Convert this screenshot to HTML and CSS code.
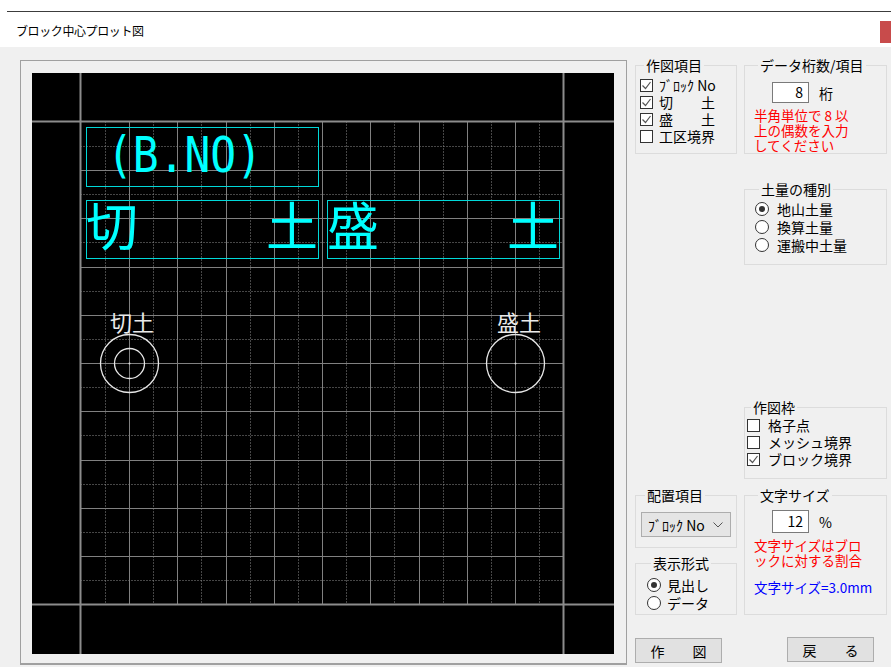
FILE: index.html
```html
<!DOCTYPE html>
<html lang="ja">
<head>
    <meta charset="UTF-8">
    <meta name="viewport" content="width=device-width, initial-scale=1.0">
    <title>ブロック中心プロット図</title>
    <link rel="stylesheet" href="styles.css">
</head>
<body>

    <div class="titlebar">
        <div class="topline"></div>
        <div class="titlerow">
            <span class="title">ブロック中心プロット図</span>
            <span class="close"></span>
        </div>
    </div>

    <div class="main">
        <!-- 作図キャンバス -->
        <div class="frame">
            <svg class="plot" width="582" height="581" viewBox="0 0 582 581">
                <rect x="0" y="0" width="582" height="581" fill="#000"/>
                <path class="dots" d="M73.5 48.5V531.5M121.5 48.5V531.5M169.5 48.5V531.5M218.5 48.5V531.5M266.5 48.5V531.5M314.5 48.5V531.5M362.5 48.5V531.5M411.5 48.5V531.5M459.5 48.5V531.5M507.5 48.5V531.5
                    M48.5 73.5H531.5M48.5 121.5H531.5M48.5 169.5H531.5M48.5 218.5H531.5M48.5 266.5H531.5M48.5 314.5H531.5M48.5 362.5H531.5M48.5 411.5H531.5M48.5 459.5H531.5M48.5 507.5H531.5"/>
                <path class="grid" d="M97.5 48.5V531.5M145.5 48.5V531.5M194.5 48.5V531.5M242.5 48.5V531.5M290.5 48.5V531.5M338.5 48.5V531.5M387.5 48.5V531.5M435.5 48.5V531.5M483.5 48.5V531.5
                    M48.5 97.5H531.5M48.5 145.5H531.5M48.5 194.5H531.5M48.5 242.5H531.5M48.5 290.5H531.5M48.5 338.5H531.5M48.5 387.5H531.5M48.5 435.5H531.5M48.5 483.5H531.5"/>
                <path class="bound" d="M48.5 0V581M531.5 0V581M0 48.5H582M0 531.5H582"/>

                <rect class="box" x="54.5" y="54.5" width="232" height="59"/>
                <rect class="box" x="54.5" y="127.5" width="232" height="58"/>
                <rect class="box" x="295.5" y="127.5" width="232" height="58"/>
                <text class="bno" x="75" y="99" textLength="155" lengthAdjust="spacingAndGlyphs">(B.NO)</text>
                <text class="big" x="54" y="173">切</text>
                <text class="big" x="286" y="173" text-anchor="end">土</text>
                <text class="big" x="295" y="173">盛</text>
                <text class="big" x="527" y="173" text-anchor="end">土</text>

                <text class="label" x="100" y="258" text-anchor="middle">切土</text>
                <circle class="ring" cx="97.5" cy="290.5" r="29"/>
                <circle class="ring" cx="97.5" cy="290.5" r="15"/>
                <circle cx="97.5" cy="290.5" r="1" fill="#ddd"/>
                <text class="label" x="487" y="258" text-anchor="middle">盛土</text>
                <circle class="ring" cx="483.5" cy="290.5" r="29"/>
                <circle cx="483.5" cy="290.5" r="1" fill="#ddd"/>
            </svg>
        </div>

        <div class="panel">
            <div class="col col-left">
                <fieldset class="g-items">
                    <legend>作図項目</legend>
                    <div class="row"><span class="chk"><svg width="11" height="11" viewBox="0 0 11 11"><path d="M1.5 5.5L4.5 8.5L9.5 2"/></svg></span>ﾌﾞﾛｯｸ No</div>
                    <div class="row"><span class="chk"><svg width="11" height="11" viewBox="0 0 11 11"><path d="M1.5 5.5L4.5 8.5L9.5 2"/></svg></span>切　　土</div>
                    <div class="row"><span class="chk"><svg width="11" height="11" viewBox="0 0 11 11"><path d="M1.5 5.5L4.5 8.5L9.5 2"/></svg></span>盛　　土</div>
                    <div class="row"><span class="chk"></span>工区境界</div>
                </fieldset>

                <fieldset class="g-place">
                    <legend>配置項目</legend>
                    <div class="select">
                        <span>ﾌﾞﾛｯｸ No</span>
                        <svg width="10" height="6" viewBox="0 0 10 6"><path d="M0.5 0.5L5 5L9.5 0.5"/></svg>
                    </div>
                </fieldset>

                <fieldset class="g-style">
                    <legend>表示形式</legend>
                    <div class="row tall"><span class="radio on"></span>見出し</div>
                    <div class="row tall"><span class="radio"></span>データ</div>
                </fieldset>

                <button class="btn">作　　図</button>
            </div>

            <div class="col col-right">
                <fieldset class="g-digits">
                    <legend>データ桁数/項目</legend>
                    <div class="inrow"><span class="num">8</span><span class="unit">桁</span></div>
                    <p class="note red">半角単位で 8 以<br>上の偶数を入力<br>してください</p>
                </fieldset>

                <fieldset class="g-kind">
                    <legend>土量の種別</legend>
                    <div class="row tall"><span class="radio on"></span>地山土量</div>
                    <div class="row tall"><span class="radio"></span>換算土量</div>
                    <div class="row tall"><span class="radio"></span>運搬中土量</div>
                </fieldset>

                <fieldset class="g-frame">
                    <legend>作図枠</legend>
                    <div class="row"><span class="chk"></span>格子点</div>
                    <div class="row"><span class="chk"></span>メッシュ境界</div>
                    <div class="row"><span class="chk"><svg width="11" height="11" viewBox="0 0 11 11"><path d="M1.5 5.5L4.5 8.5L9.5 2"/></svg></span>ブロック境界</div>
                </fieldset>

                <fieldset class="g-size">
                    <legend>文字サイズ</legend>
                    <div class="inrow"><span class="num tall">12</span><span class="unit">%</span></div>
                    <p class="note red">文字サイズはブロ<br>ックに対する割合</p>
                    <p class="note blue">文字サイズ=3.0mm</p>
                </fieldset>

                <button class="btn btn-back">戻　　る</button>
            </div>
        </div>
    </div>

</body>
</html>
```

FILE: styles.css
```css
body {
    margin: 0;
    background-color: #f0f0f0;
    font-family: "Noto Sans CJK JP", sans-serif;
    font-size: 14px;
    color: #000;
    overflow: hidden;
}

/* タイトルバー */
.titlebar {
    background-color: #fff;
    height: 47px;
    display: flex;
    flex-direction: column;
}
.topline {
    margin: 11px 0 0 7px;
    border-top: 1px solid #3c3c3c;
}
.titlerow {
    display: flex;
    justify-content: space-between;
    align-items: flex-start;
    padding-top: 9px;
}
.title {
    margin-left: 16px;
    font-size: 12px;
    line-height: 20px;
    letter-spacing: -0.4px;
}
.close {
    width: 11px;
    height: 22px;
    background-color: #c84b4b;
}

.main {
    display: flex;
    align-items: flex-start;
    padding: 10px 0 0 20px;
}

/* キャンバス */
.frame {
    box-sizing: border-box;
    width: 607px;
    height: 605px;
    margin-top: 3px;
    padding: 12px 0 0 11px;
    border: 1px solid #a0a0a0;
    border-bottom-width: 2px;
}
.plot {
    display: block;
}
.plot .grid {
    stroke: #808080;
    stroke-width: 1;
    fill: none;
}
.plot .dots {
    stroke: #8c8c8c;
    stroke-width: 1;
    stroke-dasharray: 1 2;
    fill: none;
}
.plot .bound {
    stroke: #8c8c8c;
    stroke-width: 2;
    fill: none;
}
.plot .box {
    fill: none;
    stroke: #00d8d8;
    stroke-width: 1;
}
.plot .bno {
    font-family: "DejaVu Sans Mono", monospace;
    font-size: 50px;
    fill: #00ffff;
}
.plot .big {
    font-family: "Noto Sans CJK JP", sans-serif;
    font-size: 52px;
    fill: #00ffff;
}
.plot .label {
    font-family: "Noto Sans CJK JP", sans-serif;
    font-size: 22px;
    fill: #eaeaea;
}
.plot .ring {
    fill: none;
    stroke: #e6e6e6;
    stroke-width: 1.3;
}

/* 右パネル */
.panel {
    display: flex;
    margin-left: 8px;
}
.col {
    display: flex;
    flex-direction: column;
    align-items: flex-start;
}
.col-left {
    width: 102px;
}
.col-right {
    width: 143px;
    margin-left: 7px;
}

fieldset {
    box-sizing: border-box;
    width: 100%;
    min-width: 0;
    margin: 0;
    border: 1px solid #dcdcdc;
}
legend {
    margin-left: 4px;
    padding: 0 2px;
    font-size: 14px;
    line-height: 16px;
}

.row {
    display: flex;
    align-items: center;
    height: 17px;
    line-height: 17px;
    white-space: nowrap;
}
.row.tall {
    height: 18px;
}

.chk {
    box-sizing: border-box;
    width: 13px;
    height: 13px;
    margin-right: 6px;
    border: 1px solid #333;
    background-color: #fff;
    display: flex;
    align-items: center;
    justify-content: center;
}
.chk path {
    fill: none;
    stroke: #555;
    stroke-width: 1.2;
}
.g-frame .chk {
    margin-right: 8px;
}

.radio {
    box-sizing: border-box;
    width: 14px;
    height: 14px;
    margin-right: 6px;
    border: 1px solid #333;
    border-radius: 50%;
    background-color: #fff;
    display: flex;
    align-items: center;
    justify-content: center;
}
.radio.on::after {
    content: "";
    width: 6px;
    height: 6px;
    border-radius: 50%;
    background-color: #333;
}
.g-kind .radio {
    margin-right: 8px;
}

.g-items {
    padding: 4px 0 8px 4px;
}
.g-place {
    margin-top: 333px;
    padding: 9px 0 10px 5px;
}
.g-style {
    margin-top: 7px;
    padding: 5px 0 2px 11px;
}
.g-digits {
    padding: 9px 0 0 9px;
}
.g-kind {
    margin-top: 27px;
    padding: 3px 0 10px 10px;
}
.g-frame {
    margin-top: 134px;
    padding: 2px 0 10px 2px;
}
.g-size {
    margin-top: 8px;
    padding: 7px 0 19px 9px;
}

.select {
    box-sizing: border-box;
    width: 90px;
    height: 25px;
    padding: 0 7px 0 6px;
    border: 1px solid #adadad;
    background-color: #e5e5e5;
    display: flex;
    align-items: center;
    justify-content: space-between;
}
.select path {
    fill: none;
    stroke: #555;
    stroke-width: 1;
}

.inrow {
    display: flex;
    align-items: center;
    padding-left: 18px;
}
.num {
    box-sizing: border-box;
    width: 37px;
    height: 21px;
    padding-right: 5px;
    border: 1px solid #7a7a7a;
    background-color: #fff;
    text-align: right;
    line-height: 19px;
}
.num.tall {
    height: 23px;
    line-height: 21px;
}
.unit {
    margin-left: 10px;
}

.note {
    margin: 5px 0 0 0;
    font-size: 13.5px;
    line-height: 15px;
    white-space: nowrap;
}
.red {
    color: #ff0000;
}
.blue {
    margin-top: 12px;
    color: #0000ff;
}

.btn {
    width: 87px;
    height: 25px;
    margin-top: 23px;
    padding: 0;
    border: 1px solid #adadad;
    background-color: #e1e1e1;
    font-family: "Noto Sans CJK JP", sans-serif;
    font-size: 14px;
    color: #000;
}
.btn-back {
    margin-top: 22px;
    margin-left: 43px;
}
```
